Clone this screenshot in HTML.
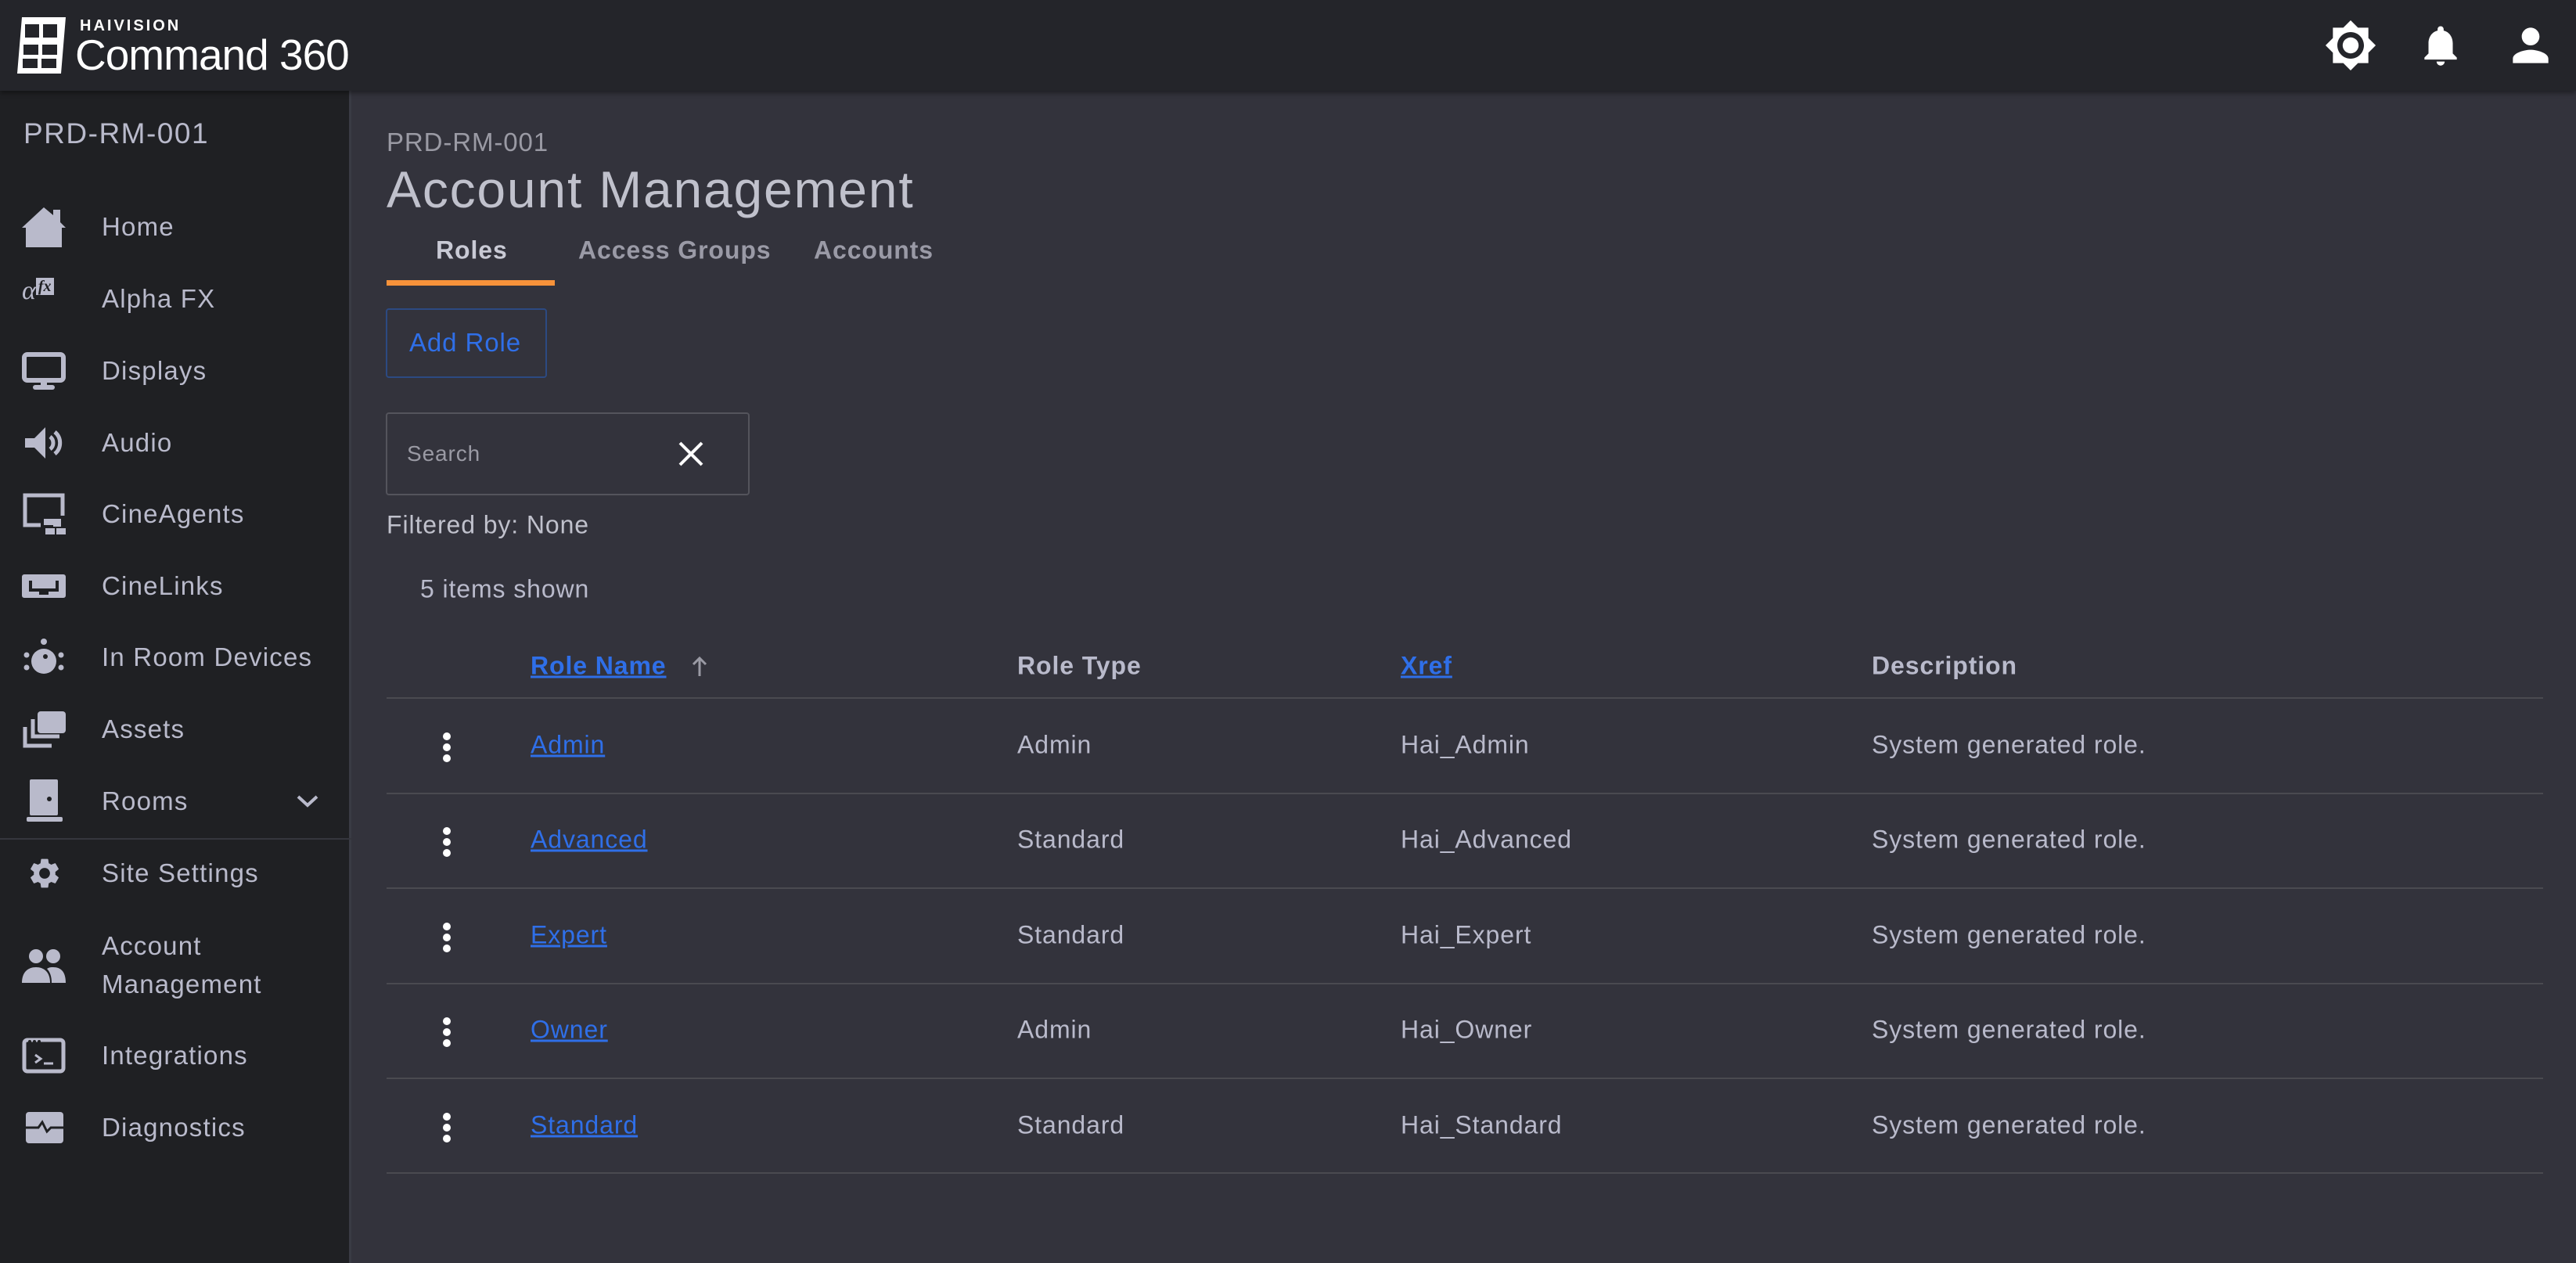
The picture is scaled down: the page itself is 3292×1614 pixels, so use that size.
<!DOCTYPE html>
<html><head><meta charset="utf-8"><style>
*{margin:0;padding:0;box-sizing:border-box}
body{width:3292px;height:1614px;background:#33333c;font-family:"Liberation Sans",sans-serif;position:relative;overflow:hidden;color:#b9bacb;letter-spacing:0.9px}
.a{position:absolute;white-space:nowrap}
#hdr{position:absolute;left:0;top:0;width:3292px;height:116px;background:#24252a;box-shadow:0 3px 6px rgba(0,0,0,.4);z-index:2}
#side{position:absolute;left:0;top:116px;width:449px;height:1498px;background:#1f2023;border-right:3px solid #3a3b44}
.nav{position:absolute;left:130px;font-size:33px;color:#b9bacb;transform:translateY(-50%);letter-spacing:1.2px}
.ic{position:absolute;left:28px;transform:translateY(-50%)}
.t{font-size:32px;transform:translateY(-50%)}
.lnk{color:#2f6fe8;text-decoration:underline}
.hl{position:absolute;left:494px;width:2756px;height:2px;background:#4a4a50}
.keb{position:absolute;left:566px;width:10px}
.keb i{display:block;width:10px;height:10px;border-radius:5px;background:#fff;margin-bottom:4px}
</style></head><body>
<div id="hdr">
 <svg class="a" style="left:22px;top:22px" width="62" height="72" viewBox="0 0 62 72"><path d="M6 0H62L56 72H0Z" fill="#fff"/><rect x="10" y="9" width="18" height="17" fill="#24252a"/><rect x="33" y="9" width="18" height="17" fill="#24252a"/><rect x="8" y="35" width="19" height="13" fill="#24252a"/><rect x="32" y="35" width="19" height="13" fill="#24252a"/><rect x="7" y="53" width="19" height="12" fill="#24252a"/><rect x="31" y="53" width="19" height="12" fill="#24252a"/></svg>
 <div class="a" style="left:102px;top:22px;font-size:20px;font-weight:bold;color:#fff;letter-spacing:3px">HAIVISION</div>
 <div class="a" style="left:96px;top:38px;font-size:55px;color:#fff;letter-spacing:-1px">Command 360</div>
 <svg class="a" style="left:2970px;top:24px" width="68" height="68" viewBox="0 0 24 24"><path fill="#fff" d="M20 8.69V4h-4.69L12 .69 8.69 4H4v4.69L.69 12 4 15.310V20h4.69L12 23.31 15.31 20H20v-4.69L23.31 12 20 8.69zM12 18c-3.31 0-6-2.69-6-6s2.69-6 6-6 6 2.690 6 6-2.69 6-6 6z"/><circle cx="12" cy="12" r="3.6" fill="#fff"/></svg>
 <svg class="a" style="left:3088px;top:26px" width="62" height="64" viewBox="0 0 24 24"><path fill="#fff" d="M12 22c1.1 0 2-.9 2-2h-4c0 1.1.9 2 2 2zm6-6v-5c0-3.07-1.64-5.64-4.5-6.32V4c0-.83-.67-1.5-1.5-1.5s-1.5.67-1.5 1.5v.68C7.63 5.36 6 7.92 6 11v5l-2 2v1h16v-1l-2-2z"/></svg>
 <svg class="a" style="left:3200px;top:24px" width="68" height="68" viewBox="0 0 24 24"><path fill="#fff" d="M12 12c2.21 0 4-1.79 4-4s-1.79-4-4-4-4 1.79-4 4 1.79 4 4 4zm0 2c-2.67 0-8 1.34-8 4v2h16v-2c0-2.66-5.33-4-8-4z"/></svg>
</div>
<div id="side"></div>
<div class="a" style="left:30px;top:150px;font-size:37px;color:#b9bacb;letter-spacing:1.5px">PRD-RM-001</div>

<svg class="ic" style="top:290px" width="56" height="56" viewBox="0 0 56 56"><path fill="#b9bacb" d="M28 3L0 29h5v25h46V29h5l-7-7V6h-9v7z"/></svg>
<div class="nav" style="top:290px">Home</div>
<div class="ic" style="top:372px;font-family:'Liberation Serif';font-style:italic;font-size:34px;color:#b9bacb;letter-spacing:0">α<span style="background:#b9bacb;color:#1f2023;font-size:20px;font-weight:bold;padding:0 3px;vertical-align:10px">fx</span></div>
<div class="nav" style="top:382px">Alpha FX</div>
<svg class="ic" style="top:475px" width="56" height="50" viewBox="0 0 56 50"><rect x="3" y="3" width="50" height="33" rx="4" fill="none" stroke="#b9bacb" stroke-width="6"/><rect x="24" y="36" width="8" height="8" fill="#b9bacb"/><rect x="14" y="42" width="28" height="6" rx="3" fill="#b9bacb"/></svg>
<div class="nav" style="top:474px">Displays</div>
<svg class="ic" style="top:566px" width="56" height="44" viewBox="0 0 56 44"><path fill="#b9bacb" d="M4 16h12L30 2v40L16 28H4z"/><path d="M36 14a10 10 0 0 1 0 16M42 8a18 18 0 0 1 0 28" fill="none" stroke="#b9bacb" stroke-width="5"/></svg>
<div class="nav" style="top:566px">Audio</div>
<svg class="ic" style="top:657px" width="56" height="56" viewBox="0 0 56 56"><path d="M24 42H4V4h48v26" fill="none" stroke="#b9bacb" stroke-width="5"/><rect x="28" y="34" width="12" height="8" fill="#b9bacb"/><rect x="30" y="46" width="12" height="8" fill="#b9bacb"/><rect x="44" y="46" width="12" height="8" fill="#b9bacb"/><rect x="40" y="34" width="10" height="10" fill="#b9bacb"/></svg>
<div class="nav" style="top:657px">CineAgents</div>
<svg class="ic" style="top:749px" width="56" height="30" viewBox="0 0 56 30"><rect width="56" height="30" rx="3" fill="#b9bacb"/><path d="M11 8v12h34V8" fill="none" stroke="#1f2023" stroke-width="4"/><rect x="22" y="18" width="12" height="8" fill="#1f2023"/></svg>
<div class="nav" style="top:749px">CineLinks</div>
<svg class="ic" style="top:840px" width="56" height="50" viewBox="0 0 56 50"><circle cx="28" cy="30" r="16" fill="#b9bacb"/><circle cx="28" cy="5" r="4" fill="#b9bacb"/><circle cx="6" cy="22" r="3.5" fill="#b9bacb"/><circle cx="50" cy="22" r="3.5" fill="#b9bacb"/><circle cx="6" cy="38" r="3.5" fill="#b9bacb"/><circle cx="50" cy="38" r="3.5" fill="#b9bacb"/><circle cx="30" cy="24" r="3" fill="#1f2023"/></svg>
<div class="nav" style="top:840px">In Room Devices</div>
<svg class="ic" style="top:932px" width="56" height="50" viewBox="0 0 56 50"><rect x="20" y="2" width="36" height="28" rx="4" fill="#b9bacb"/><path d="M14 12v22h34M4 22v24h34" fill="none" stroke="#b9bacb" stroke-width="5"/></svg>
<div class="nav" style="top:932px">Assets</div>
<svg class="ic" style="top:1024px;left:34px" width="46" height="56" viewBox="0 0 46 56"><rect x="4" y="0" width="36" height="46" rx="2" fill="#b9bacb"/><rect x="0" y="48" width="46" height="6" rx="2" fill="#b9bacb"/><circle cx="29" cy="25" r="3" fill="#1f2023"/></svg>
<div class="nav" style="top:1024px">Rooms</div>
<svg class="a" style="left:378px;top:1014px" width="30" height="20" viewBox="0 0 30 20"><path d="M3 4l12 11L27 4" fill="none" stroke="#b9bacb" stroke-width="4"/></svg>
<div class="a" style="left:0;top:1071px;width:449px;height:2px;background:#35363d"></div>
<svg class="ic" style="top:1116px;left:34px" width="46" height="46" viewBox="0 0 24 24"><path fill="#b9bacb" d="M19.14 12.94c.04-.3.06-.61.06-.94 0-.32-.02-.64-.07-.94l2.03-1.58a.49.49 0 0 0 .12-.61l-1.92-3.32a.488.488 0 0 0-.59-.22l-2.39.96c-.5-.38-1.03-.7-1.62-.94l-.36-2.54a.484.484 0 0 0-.48-.41h-3.840c-.24 0-.43.17-.47.41l-.36 2.54c-.59.24-1.13.57-1.62.94l-2.39-.96c-.22-.08-.47 0-.59.22L2.74 8.87c-.12.21-.08.47.12.61l2.03 1.58c-.05.3-.09.63-.09.94s.02.64.07.94l-2.03 1.58a.49.49 0 0 0-.12.61l1.92 3.32c.12.22.37.29.59.22l2.39-.96c.5.38 1.03.7 1.62.94l.36 2.54c.05.24.24.41.48.41h3.84c.24 0 .44-.17.47-.41l.36-2.54c.59-.24 1.13-.56 1.62-.94l2.39.96c.22.08.47 0 .59-.22l1.92-3.32c.12-.22.07-.47-.12-.61l-2.01-1.58zM12 15.6c-1.98 0-3.6-1.62-3.6-3.6s1.62-3.6 3.6-3.6 3.6 1.62 3.6 3.6-1.62 3.6-3.6 3.6z"/></svg>
<div class="nav" style="top:1116px">Site Settings</div>
<svg class="ic" style="top:1234px" width="56" height="44" viewBox="0 0 56 44"><circle cx="18" cy="10" r="9" fill="#b9bacb"/><circle cx="40" cy="10" r="9" fill="#b9bacb"/><path d="M0 44c0-14 8-20 18-20s18 6 18 20z" fill="#b9bacb"/><path d="M32 26c3-2 5-2 8-2 10 0 16 6 16 20H38c0-8-2-14-6-18z" fill="#b9bacb"/></svg>
<div class="nav" style="top:1209px">Account</div>
<div class="nav" style="top:1258px">Management</div>
<svg class="ic" style="top:1349px" width="56" height="46" viewBox="0 0 56 46"><rect x="3" y="3" width="50" height="40" rx="4" fill="none" stroke="#b9bacb" stroke-width="5"/><path d="M17 22l7 5-7 5M28 33h12" fill="none" stroke="#b9bacb" stroke-width="3"/><circle cx="10" cy="5" r="2" fill="#1f2023"/><circle cx="16" cy="5" r="2" fill="#1f2023"/><circle cx="22" cy="5" r="2" fill="#1f2023"/></svg>
<div class="nav" style="top:1349px">Integrations</div>
<svg class="ic" style="top:1441px;left:33px" width="48" height="40" viewBox="0 0 48 40"><rect width="48" height="40" rx="4" fill="#b9bacb"/><path d="M0 20h16l5-7 6 12 5-5h16" fill="none" stroke="#1f2023" stroke-width="3"/></svg>
<div class="nav" style="top:1441px">Diagnostics</div>

<!-- main -->
<div class="a t" style="left:494px;top:182px;color:#9a9aa4;font-size:33px">PRD-RM-001</div>
<div class="a" style="left:494px;top:242px;font-size:66px;color:#c0c1cc;transform:translateY(-50%);letter-spacing:1.8px">Account Management</div>
<div class="a t" style="left:557px;top:320px;font-weight:bold;color:#c9cad5">Roles</div>
<div class="a t" style="left:739px;top:320px;font-weight:bold;color:#9a9aa6">Access Groups</div>
<div class="a t" style="left:1040px;top:320px;font-weight:bold;color:#9a9aa6">Accounts</div>
<div class="a" style="left:494px;top:358px;width:215px;height:7px;background:#f7923a"></div>
<div class="a" style="left:493px;top:394px;width:206px;height:89px;border:2px solid #2c4a82;border-radius:4px"></div>
<div class="a t" style="left:523px;top:438px;color:#2f6fe8;font-size:33px">Add Role</div>
<div class="a" style="left:493px;top:527px;width:465px;height:106px;border:2px solid #54545c;border-radius:4px"></div>
<div class="a t" style="left:520px;top:580px;font-size:28px;color:#9a9aa4">Search</div>
<svg class="a" style="left:866px;top:563px" width="34" height="34" viewBox="0 0 34 34"><path d="M3 3l28 28M31 3L3 31" stroke="#fff" stroke-width="4"/></svg>
<div class="a t" style="left:494px;top:671px;color:#c0c1cc">Filtered by: None</div>
<div class="a t" style="left:537px;top:753px;color:#b9bacb">5 items shown</div>

<div class="a t lnk" style="left:678px;top:851px;font-weight:bold">Role Name</div>
<svg class="a" style="left:884px;top:838px" width="20" height="28" viewBox="0 0 20 28"><path d="M10 26V3M2 11l8-8 8 8" fill="none" stroke="#9a9aa4" stroke-width="3"/></svg>
<div class="a t" style="left:1300px;top:851px;font-weight:bold">Role Type</div>
<div class="a t lnk" style="left:1790px;top:851px;font-weight:bold">Xref</div>
<div class="a t" style="left:2392px;top:851px;font-weight:bold">Description</div>
<div class="hl" style="top:891px"></div>

<div class="keb" style="top:936px"><i></i><i></i><i></i></div>
<div class="a t lnk" style="left:678px;top:952px">Admin</div><div class="a t" style="left:1300px;top:952px">Admin</div><div class="a t" style="left:1790px;top:952px">Hai_Admin</div><div class="a t" style="left:2392px;top:952px">System generated role.</div>
<div class="hl" style="top:1013px"></div>
<div class="keb" style="top:1057px"><i></i><i></i><i></i></div>
<div class="a t lnk" style="left:678px;top:1073px">Advanced</div><div class="a t" style="left:1300px;top:1073px">Standard</div><div class="a t" style="left:1790px;top:1073px">Hai_Advanced</div><div class="a t" style="left:2392px;top:1073px">System generated role.</div>
<div class="hl" style="top:1134px"></div>
<div class="keb" style="top:1179px"><i></i><i></i><i></i></div>
<div class="a t lnk" style="left:678px;top:1195px">Expert</div><div class="a t" style="left:1300px;top:1195px">Standard</div><div class="a t" style="left:1790px;top:1195px">Hai_Expert</div><div class="a t" style="left:2392px;top:1195px">System generated role.</div>
<div class="hl" style="top:1256px"></div>
<div class="keb" style="top:1300px"><i></i><i></i><i></i></div>
<div class="a t lnk" style="left:678px;top:1316px">Owner</div><div class="a t" style="left:1300px;top:1316px">Admin</div><div class="a t" style="left:1790px;top:1316px">Hai_Owner</div><div class="a t" style="left:2392px;top:1316px">System generated role.</div>
<div class="hl" style="top:1377px"></div>
<div class="keb" style="top:1422px"><i></i><i></i><i></i></div>
<div class="a t lnk" style="left:678px;top:1438px">Standard</div><div class="a t" style="left:1300px;top:1438px">Standard</div><div class="a t" style="left:1790px;top:1438px">Hai_Standard</div><div class="a t" style="left:2392px;top:1438px">System generated role.</div>
<div class="hl" style="top:1498px"></div>
</body></html>
